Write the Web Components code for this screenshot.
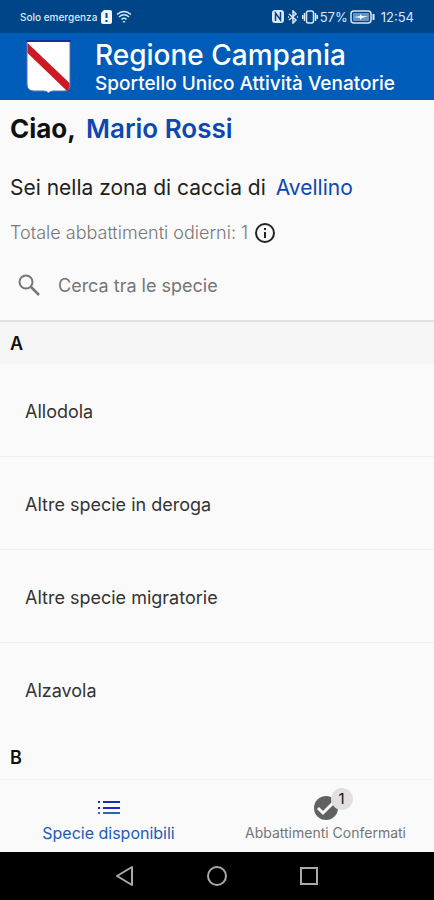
<!DOCTYPE html>
<html lang="it">
<head>
<meta charset="utf-8">
<meta name="viewport" content="width=device-width, initial-scale=1">
<title>Sportello Unico Attività Venatorie</title>
<style>
    body{
        margin:0;
        font-family: Inter, 'Noto Sans', sans-serif;
        background: #fafafa;
        --blue: #0d47b0;
        --bar: #005cb9;
        --bar-dark: #004587;
    }
</style>
</head>
<body>
<app-screen>
    <status-bar slot="top"></status-bar>
    <app-header slot="top">
        <span slot="title">Regione Campania</span>
        <span slot="subtitle">Sportello Unico Attività Venatorie</span>
    </app-header>
    <hunter-summary slot="top">
        <span slot="name">Mario Rossi</span>
        <span slot="zone">Avellino</span>
        <span slot="total">1</span>
    </hunter-summary>
    <species-search slot="top"></species-search>

    <species-group first>
        <span slot="letter">A</span>
        <species-row>Allodola</species-row>
        <species-row>Altre specie in deroga</species-row>
        <species-row>Altre specie migratorie</species-row>
        <species-row>Alzavola</species-row>
    </species-group>
    <species-group>
        <span slot="letter">B</span>
    </species-group>

    <tab-bar slot="bottom">
        <tab-item active>
            <svg slot="icon" width="24" height="24" viewBox="0 0 24 24" fill="#1b2fae"><path d="M1 5h2v2H1zM1 11h2v2H1zM6 5h17v2H6zM6 11h17v2H6z"/><path fill="#2468c0" d="M1 16h2v2H1zM6 16h17v2H6z"/></svg>
            Specie disponibili
        </tab-item>
        <tab-item badge="1">
            <svg slot="icon" width="24" height="24" viewBox="0 0 24 24"><circle cx="12" cy="12" r="12" fill="#616161"/><path d="M4 12l5 5 10-10" fill="none" stroke="#fafafa" stroke-width="3"/></svg>
            Abbattimenti Confermati
        </tab-item>
    </tab-bar>
    <system-nav slot="bottom"></system-nav>
</app-screen>

<script>
// makes a template out of a string
const html = (markup) => {
    const template = document.createElement('template');
    template.innerHTML = markup;
    return template;
};

// BASE ELEMENT
class BaseElement extends HTMLElement{

    constructor(){
        super();
        this.attachShadow({mode:'open'});
        this.shadowRoot.appendChild(this.constructor.template.content.cloneNode(true));
    }
}

// SCREEN
class AppScreen extends BaseElement{
    static template = html(`
<style>
    :host{
        display:flex;
        flex-direction:column;
        height:100vh;
    }

    main{
        flex:1;
        min-height:0;
        overflow:hidden;
    }
</style>
<slot name="top"></slot>
<main><slot></slot></main>
<slot name="bottom"></slot>
`);
}

// PHONE STATUS BAR
class StatusBar extends BaseElement{
    static template = html(`
<style>
    :host{
        display:flex;
        justify-content:space-between;
        align-items:center;
        height:33px;
        padding: 0 20px;
        background: var(--bar-dark);
        color: #dce8f5;
        font-size:13px;
    }

    div{
        display:flex;
        align-items:center;
        gap:2px;
    }

    .network{
        margin-right:2px;
        font-size:10px;
        font-weight:500;
    }

    .network + svg{
        margin-right:2px;
    }

    .time{
        margin-left:4px;
    }
</style>
<div>
    <span class="network">Solo emergenza</span>
    <svg width="11" height="14" viewBox="0 0 11 14"><path d="M3 0h6a2 2 0 0 1 2 2v10a2 2 0 0 1-2 2H2a2 2 0 0 1-2-2V3z" fill="#f2f7fc"/><path d="M5.5 3v5M5.5 10v2" stroke="#004587" stroke-width="2"/></svg>
    <svg width="16" height="14" viewBox="0 0 16 14" fill="none" stroke="#dce8f5" stroke-width="1.5"><path d="M1 4.500Q8-1.500 15 4.500M3 7Q8 2.500 13 7M5.500 9.500Q8 7 10.500 9.500"/><path d="M6.500 11h3L8 13z" fill="#dce8f5" stroke="none"/></svg>
</div>
<div>
    <svg width="12" height="13" viewBox="0 0 12 13"><rect width="12" height="13" rx="3" fill="#dce8f5"/><path d="M3.500 11V3l5 7V2" fill="none" stroke="#004587" stroke-width="1.500"/></svg>
    <svg width="14" height="14" viewBox="-1 0 14 14" fill="none" stroke="#dce8f5" stroke-width="1.500"><path d="M2 4l7 6-3 3V1l3 3-7 6"/><path d="M1 7h1M10 7h1"/></svg>
    <svg width="16" height="14" viewBox="0 0 16 14" fill="none" stroke="#dce8f5" stroke-width="1.500"><rect x="4.500" y="1" width="7" height="12" rx="2"/><path d="M2.500 3v8M.7 5v4M13.500 3v8M15.300 5v4"/></svg>
    <span>57%</span>
    <svg width="25" height="14" viewBox="0 0 25 14"><rect x="1" y="1" width="20" height="12" rx="3" fill="none" stroke="#dce8f5" stroke-width="1.500"/><rect x="3" y="3" width="16" height="8" rx="1" fill="#6a93bd"/><path d="M4 7l6-1V4l2 2h6l-6 2-2 2V8z" fill="#f2f7fc"/><path d="M23.500 4v6" stroke="#dce8f5" stroke-width="2"/></svg>
    <span class="time">12:54</span>
</div>
`);
}

// BLUE HEADER
class AppHeader extends BaseElement{
    static template = html(`
<style>
    :host{
        display:block;
        background: var(--bar);
        color:white;
    }

    header{
        display:flex;
        align-items:center;
        gap:24px;
        height:67px;
        padding: 0 26px;
    }

    h1, p{
        margin:0;
        font-weight:500;
        white-space:nowrap;
    }

    h1{
        margin-top:2px;
        font-size:28px;
        line-height:32px;
    }

    p{
        font-size:19px;
        line-height:26px;
    }
</style>
<header>
    <svg width="45" height="53" viewBox="0 0 45 53" role="img" aria-label="Stemma">
        <path d="M1 1h43v44q0 6-6 6H27q-3 0-4.500 2Q21 51 18 51H8q-7 0-7-7z" fill="#fff" stroke="#4f72c4"/>
        <path d="M1.500 3v10L41 51q3-2 2.500-8z" fill="#cc1a24"/>
        <path d="M0 1h45" stroke="#1c2a9c" stroke-width="2"/>
    </svg>
    <div>
        <h1><slot name="title"></slot></h1>
        <p><slot name="subtitle"></slot></p>
    </div>
</header>
`);
}

// GREETING, ZONE AND DAILY TOTAL
class HunterSummary extends BaseElement{
    static template = html(`
<style>
    :host{
        display:block;
        padding: 12px 10px 0;
    }

    h2, p{
        display:flex;
        align-items:center;
        margin:0;
        white-space:nowrap;
    }

    h2{
        gap:10px;
        font-size:26px;
        font-weight:700;
        line-height:34px;
        color:#111;
    }

    slot[name="name"]{
        color: var(--blue);
        font-weight:600;
    }

    .zone{
        gap:10px;
        margin-top:28px;
        font-size:21px;
        line-height:28px;
        color:#222;
    }

    slot[name="zone"]{
        color: var(--blue);
    }

    .total{
        gap:7px;
        margin-top:18px;
        font-size:18px;
        font-weight:300;
        line-height:26px;
        color:#777;
    }

    button{
        display:flex;
        padding:0;
        border:none;
        background:none;
    }
</style>
<h2>Ciao, <slot name="name"></slot></h2>
<p class="zone">Sei nella zona di caccia di <slot name="zone"></slot></p>
<p class="total">
    <span>Totale abbattimenti odierni: <slot name="total"></slot></span>
    <button type="button" aria-label="Informazioni"><svg width="20" height="20" viewBox="0 0 20 20"><circle cx="10" cy="10" r="9" fill="none" stroke="#222" stroke-width="2"/><path d="M10 5v2M10 9v6" stroke="#222" stroke-width="2"/></svg></button>
</p>
`);
}

// SEARCH BOX
class SpeciesSearch extends BaseElement{
    static template = html(`
<style>
    :host{
        display:block;
    }

    label{
        display:flex;
        align-items:center;
        gap:18px;
        height:70px;
        margin-top:4px;
        padding: 0 18px;
        border-bottom:2px solid #e0e0e0;
    }

    input{
        flex:1;
        min-width:0;
        padding:0;
        border:none;
        outline:none;
        background:none;
        font-family:inherit;
        font-size:18px;
        color:#222;
    }

    input::placeholder{
        color:#757575;
        opacity:1;
    }
</style>
<label>
    <svg width="22" height="22" viewBox="0 0 22 22" fill="none" stroke="#757575" stroke-width="2"><circle cx="8" cy="8" r="6.500"/><path d="M13 13l8 8" stroke-width="2.500"/></svg>
    <input type="search" placeholder="Cerca tra le specie" aria-label="Cerca tra le specie">
</label>
`);
}

// LETTER GROUP
class SpeciesGroup extends BaseElement{
    static template = html(`
<style>
    :host{
        display:block;
    }

    h3{
        margin:0;
        padding: 2px 10px 0;
        font-size:18px;
        font-weight:600;
        line-height:40px;
        color:#111;
    }

    :host([first]) h3{
        background:#f5f5f5;
    }
</style>
<h3><slot name="letter"></slot></h3>
<slot></slot>
`);
}

// SPECIES ROW
class SpeciesRow extends BaseElement{
    static template = html(`
<style>
    :host{
        display:block;
        border-bottom:1px solid #eee;
    }

    :host(:last-child){
        border-color:transparent;
    }

    button{
        display:block;
        width:100%;
        height:92px;
        padding: 2px 25px 0;
        border:none;
        background:none;
        font-family:inherit;
        font-size:18px;
        text-align:left;
        color:#333;
        cursor:pointer;
    }
</style>
<button type="button"><slot></slot></button>
`);
}

// TABS
class TabBar extends BaseElement{
    static template = html(`
<style>
    :host{
        display:block;
        border-top:1px solid #f2f2f2;
        background:#fafafa;
    }

    nav{
        display:grid;
        grid-template-columns: 1fr 1fr;
        height:72px;
    }
</style>
<nav><slot></slot></nav>
`);
}

class TabItem extends BaseElement{
    static template = html(`
<style>
    :host{
        display:block;
    }

    button{
        display:flex;
        flex-direction:column;
        align-items:center;
        gap:3px;
        width:100%;
        height:100%;
        padding: 16px 0 0;
        border:none;
        background:none;
        font-family:inherit;
        font-size:14px;
        line-height:20px;
        white-space:nowrap;
        color:#757575;
        cursor:pointer;
    }

    :host([active]) button{
        font-size:16px;
        color:#1a5cb8;
    }

    .icon{
        position:relative;
        display:flex;
    }

    .badge{
        position:absolute;
        top:-8px;
        left:17px;
        width:22px;
        border-radius:50%;
        background:#e0e0e0;
        font-size:15px;
        line-height:22px;
        color:#111;
    }
</style>
<button type="button">
    <span class="icon"><slot name="icon"></slot><span class="badge"></span></span>
    <span><slot></slot></span>
</button>
`);

    connectedCallback() {
        const badge = this.shadowRoot.querySelector('.badge');
        if (this.hasAttribute('badge')) {
            badge.textContent = this.getAttribute('badge');
        } else {
            badge.remove();
        }
    }
}

// PHONE BUTTONS
class SystemNav extends BaseElement{
    static template = html(`
<style>
    :host{
        display:flex;
        justify-content:center;
        gap:68px;
        height:48px;
        background:black;
    }

    button{
        display:flex;
        align-items:center;
        padding:0;
        border:none;
        background:none;
    }

    svg{
        fill:none;
        stroke:#aaa;
        stroke-width:2;
    }
</style>
<button type="button" aria-label="Indietro"><svg width="24" height="24" viewBox="0 0 24 24"><path d="M19 3v18L4 12z" stroke-linejoin="round"/></svg></button>
<button type="button" aria-label="Home"><svg width="24" height="24" viewBox="0 0 24 24"><circle cx="12" cy="12" r="9"/></svg></button>
<button type="button" aria-label="Recenti"><svg width="24" height="24" viewBox="0 0 24 24"><rect x="4" y="4" width="16" height="16"/></svg></button>
`);
}

window.customElements.define('app-screen', AppScreen);
window.customElements.define('status-bar', StatusBar);
window.customElements.define('app-header', AppHeader);
window.customElements.define('hunter-summary', HunterSummary);
window.customElements.define('species-search', SpeciesSearch);
window.customElements.define('species-group', SpeciesGroup);
window.customElements.define('species-row', SpeciesRow);
window.customElements.define('tab-bar', TabBar);
window.customElements.define('tab-item', TabItem);
window.customElements.define('system-nav', SystemNav);
</script>
</body>
</html>
